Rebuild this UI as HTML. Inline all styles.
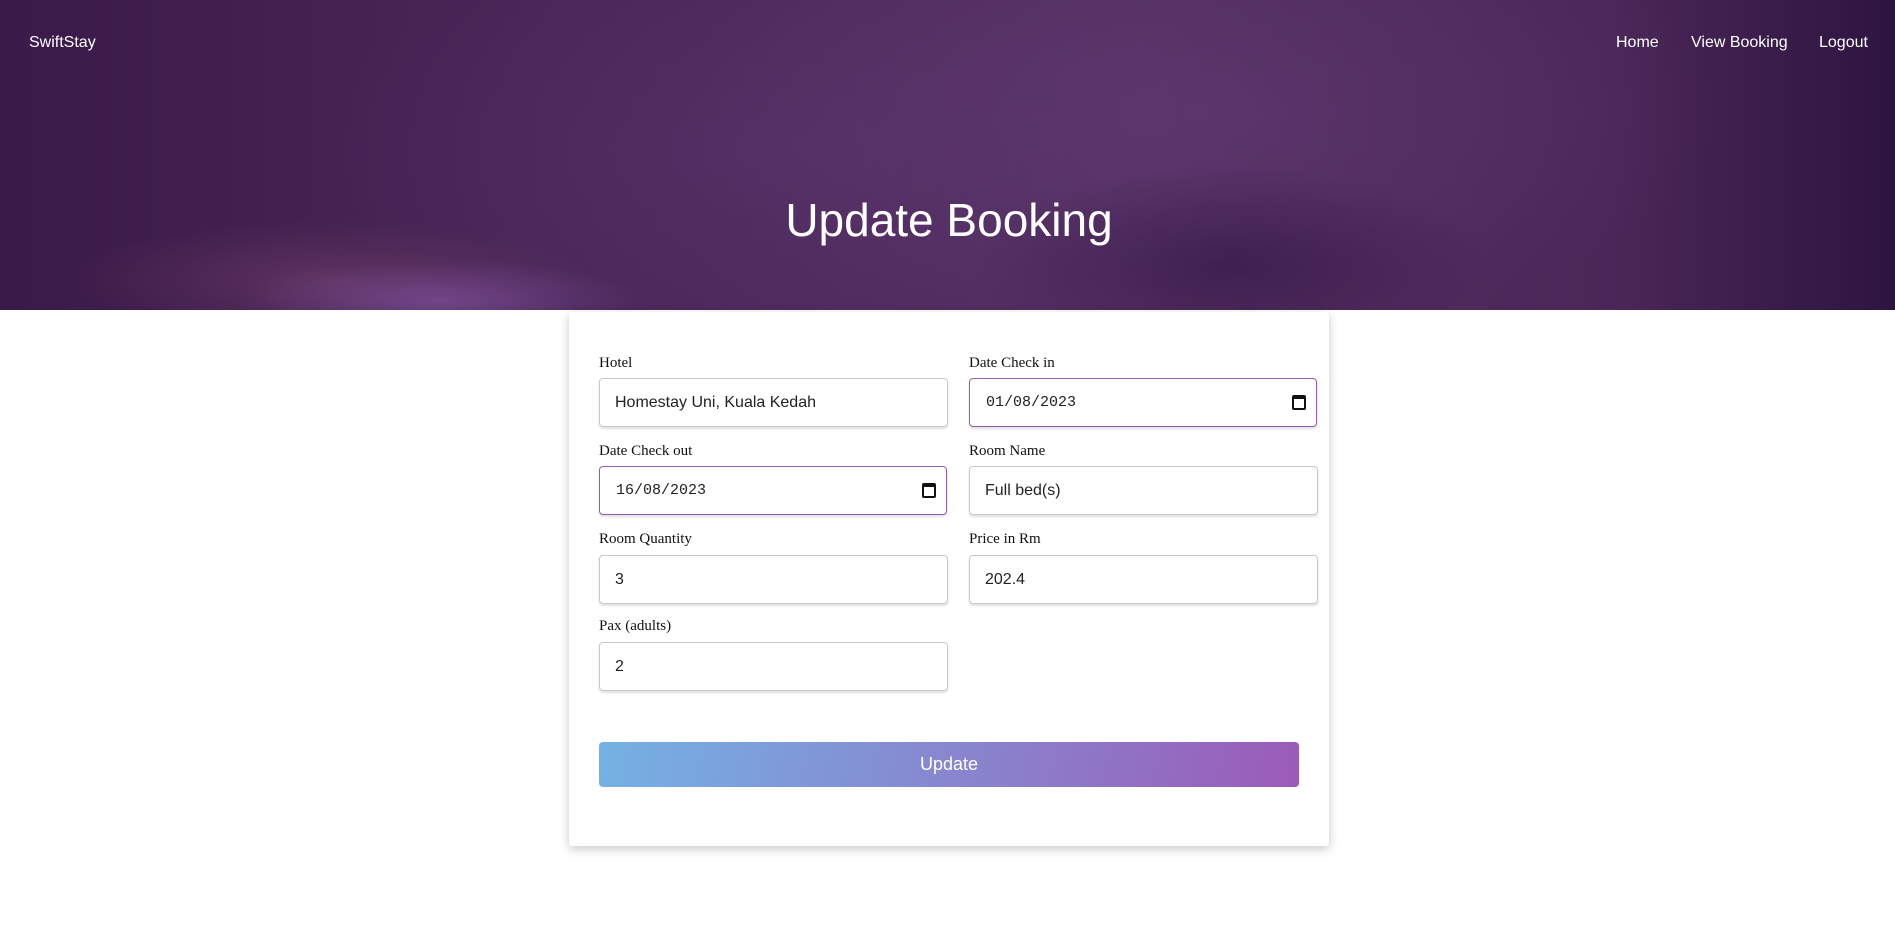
<!DOCTYPE html>
<html><head><meta charset="utf-8"><style>
*{box-sizing:border-box;margin:0;padding:0}
body{width:1895px;height:933px;background:#fff;position:relative;overflow:hidden;font-family:"Liberation Sans",sans-serif}
.hero{position:absolute;left:0;top:0;width:1895px;height:310px;
background:
radial-gradient(ellipse 200px 40px at 440px 300px,rgba(150,100,190,.45),transparent),
radial-gradient(ellipse 260px 60px at 330px 280px,rgba(140,80,120,.35),transparent),
radial-gradient(ellipse 260px 100px at 1230px 265px,rgba(40,15,60,.5),transparent),
radial-gradient(ellipse 520px 220px at 1200px 110px,rgba(100,60,120,.45),transparent),
radial-gradient(ellipse 500px 200px at 800px 150px,rgba(90,55,115,.4),transparent),
linear-gradient(90deg,#3a1a48 0%,#4a2758 30%,#553062 60%,#4a2758 85%,#2e1440 100%);}
.nav{position:absolute;top:34px;color:#fff;font-size:16px}
h1{position:absolute;top:193px;left:0;width:1898px;text-align:center;color:#fff;font-weight:400;font-size:46px}
.card{position:absolute;left:569px;top:312px;width:760px;height:534px;background:#fff;box-shadow:0 3px 10px rgba(0,0,0,.22);border-radius:3px}
.lbl{position:absolute;font-family:"Liberation Serif",serif;font-size:15px;color:#111}
.in{position:absolute;height:49px;border:1px solid #c8c8c8;border-radius:4px;box-shadow:0 2px 2px rgba(0,0,0,.12);font-size:16px;color:#222;padding-left:15px;line-height:47px}
.dt{border:1.5px solid #9b59b6;font-family:"Liberation Mono",monospace;font-size:15px;padding-left:16px}
.cal{position:absolute;right:10px;top:16px;width:14px;height:15px;border:2px solid #111;border-top-width:4px;border-radius:2px}
.btn{position:absolute;left:30px;top:430px;width:700px;height:45px;border-radius:4px;background:linear-gradient(100deg,#74b2e4,#9b5bb8);color:#fff;text-align:center;line-height:45px;font-size:18px}
</style></head><body>
<div class="hero"></div>
<div class="nav" style="left:29px">SwiftStay</div>
<div class="nav" style="left:1616px">Home</div>
<div class="nav" style="left:1691px">View Booking</div>
<div class="nav" style="left:1819px">Logout</div>
<h1>Update Booking</h1>
<div class="card">
<div class="lbl" style="left:30px;top:43px">Hotel</div>
<div class="in" style="left:30px;top:66px;width:349px">Homestay Uni, Kuala Kedah</div>
<div class="lbl" style="left:400px;top:43px">Date Check in</div>
<div class="in dt" style="left:400px;top:66px;width:348px">01/08/2023<span class="cal"></span></div>
<div class="lbl" style="left:30px;top:131px">Date Check out</div>
<div class="in dt" style="left:30px;top:154px;width:348px">16/08/2023<span class="cal"></span></div>
<div class="lbl" style="left:400px;top:131px">Room Name</div>
<div class="in" style="left:400px;top:154px;width:349px">Full bed(s)</div>
<div class="lbl" style="left:30px;top:219px">Room Quantity</div>
<div class="in" style="left:30px;top:243px;width:349px">3</div>
<div class="lbl" style="left:400px;top:219px">Price in Rm</div>
<div class="in" style="left:400px;top:243px;width:349px">202.4</div>
<div class="lbl" style="left:30px;top:306px">Pax (adults)</div>
<div class="in" style="left:30px;top:330px;width:349px">2</div>
<div class="btn">Update</div>
</div>
</body></html>
